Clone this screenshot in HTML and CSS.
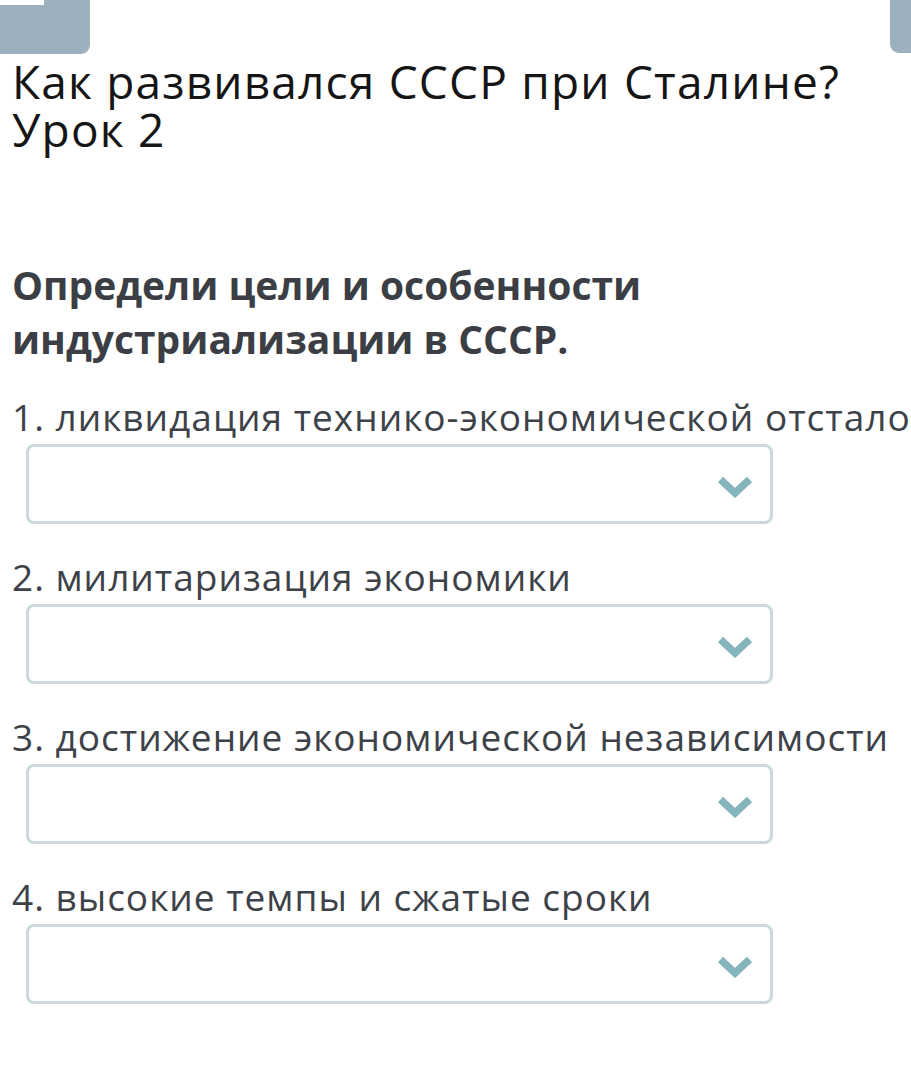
FILE: index.html
```html
<!DOCTYPE html>
<html lang="ru">
<head>
<meta charset="utf-8">
<link rel="stylesheet" href="styles.css">
</head>
<body>
<div class="topbar">
  <div class="tab-left"><div class="tab-inner"></div></div>
  <div class="tab-right"></div>
</div>
<main class="content">
  <h1 class="title">Как развивался СССР при Сталине?<br>Урок 2</h1>
  <p class="question">Определи цели и особенности индустриализации в СССР.</p>
  <div class="items">
    <div class="item">
      <div class="label">1. ликвидация технико-экономической отсталости</div>
      <div class="select"><svg class="chev" viewBox="0 0 36 22"><path d="M3.5 3.5 L18 17 L32.5 3.5" fill="none" stroke="#85b5bc" stroke-width="7.5" stroke-linejoin="miter"/></svg></div>
    </div>
    <div class="item">
      <div class="label">2. милитаризация экономики</div>
      <div class="select"><svg class="chev" viewBox="0 0 36 22"><path d="M3.5 3.5 L18 17 L32.5 3.5" fill="none" stroke="#85b5bc" stroke-width="7.5" stroke-linejoin="miter"/></svg></div>
    </div>
    <div class="item">
      <div class="label">3. достижение экономической независимости</div>
      <div class="select"><svg class="chev" viewBox="0 0 36 22"><path d="M3.5 3.5 L18 17 L32.5 3.5" fill="none" stroke="#85b5bc" stroke-width="7.5" stroke-linejoin="miter"/></svg></div>
    </div>
    <div class="item">
      <div class="label">4. высокие темпы и сжатые сроки</div>
      <div class="select"><svg class="chev" viewBox="0 0 36 22"><path d="M3.5 3.5 L18 17 L32.5 3.5" fill="none" stroke="#85b5bc" stroke-width="7.5" stroke-linejoin="miter"/></svg></div>
    </div>
  </div>
</main>
</body>
</html>
```

FILE: styles.css
```css
html, body {
  margin: 0;
  padding: 0;
  background: #ffffff;
  overflow: hidden;
}
body {
  font-family: "Open Sans", "Noto Sans", sans-serif;
  width: 911px;
  height: 1080px;
}
.topbar {
  display: flex;
  justify-content: space-between;
  height: 54px;
}
.tab-left {
  width: 90px;
  height: 54px;
  background: #9cb0bd;
  border-bottom-right-radius: 9px;
}
.tab-inner {
  width: 44px;
  height: 5px;
  background: #ffffff;
}
.tab-right {
  width: 21px;
  height: 53px;
  background: #9cb0bd;
  border-bottom-left-radius: 9px;
}
.content {
  padding-left: 12px;
}
.title {
  margin: 3px 0 0 0;
  font-size: 46px;
  line-height: 48px;
  font-weight: 400;
  letter-spacing: 1.2px;
  color: #151515;
}
.question {
  margin: 105px 0 0 0;
  font-size: 39px;
  line-height: 54px;
  font-weight: 700;
  color: #3b3f45;
  width: 680px;
}
.items {
  display: flex;
  flex-direction: column;
  gap: 29px;
  margin-top: 27px;
}
.item {
  display: flex;
  flex-direction: column;
  gap: 3px;
}
.label {
  font-size: 37px;
  line-height: 48px;
  letter-spacing: 1px;
  color: #3d4248;
  white-space: nowrap;
}
.select {
  margin-left: 14px;
  width: 747px;
  height: 80px;
  box-sizing: border-box;
  border: 3px solid #c9d9dd;
  border-radius: 8px;
  display: flex;
  align-items: center;
  justify-content: flex-end;
  padding: 5px 17px 0 0;
}
.chev {
  width: 36px;
  height: 22px;
  display: block;
}
```
